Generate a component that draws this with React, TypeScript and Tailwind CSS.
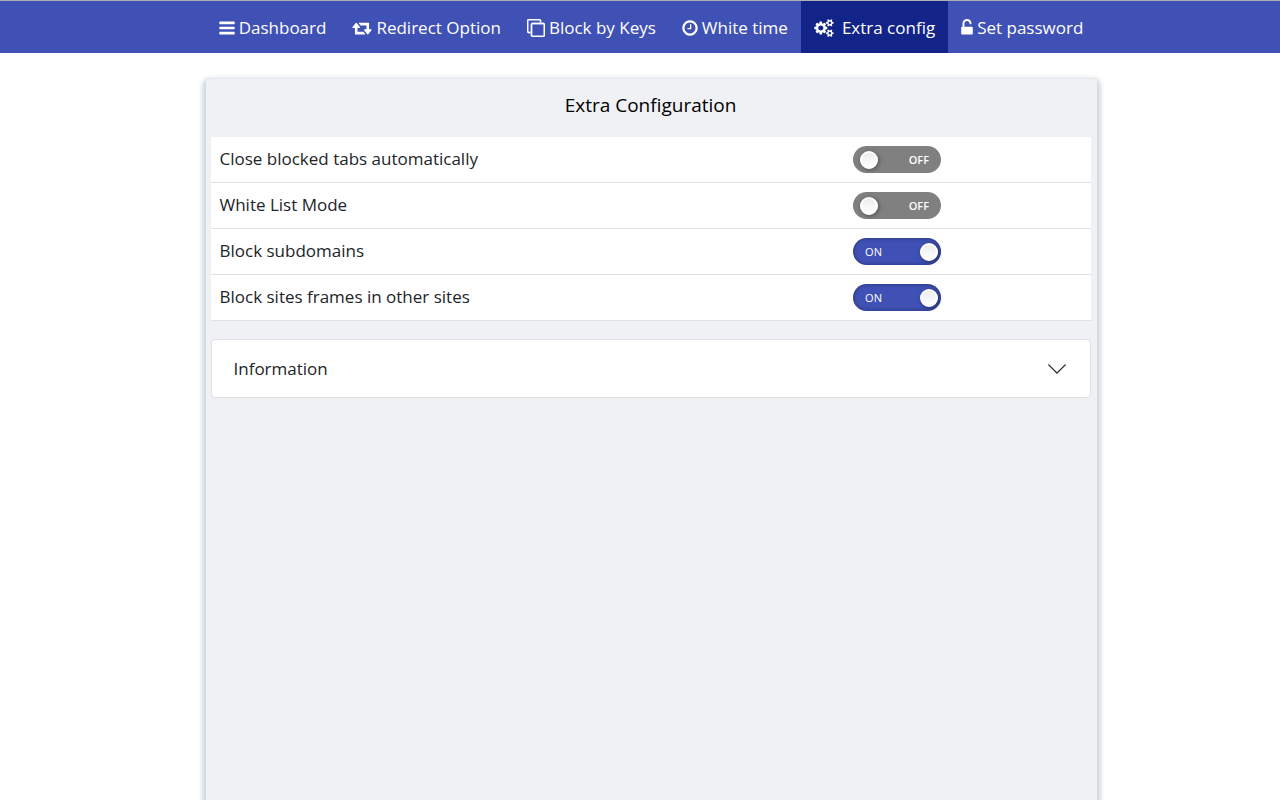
import { useState } from "react";
import clsx from "clsx";

type Icon = { viewBox: string; size: string; path: string };

const icons: Record<string, Icon> = {
  bars: {
    viewBox: "128 0 1536 1792",
    size: "h-[18px] w-4",
    path: "M1664 1344v128q0 26-19 45t-45 19h-1408q-26 0-45-19t-19-45v-128q0-26 19-45t45-19h1408q26 0 45 19t19 45zm0-512v128q0 26-19 45t-45 19h-1408q-26 0-45-19t-19-45v-128q0-26 19-45t45-19h1408q26 0 45 19t19 45zm0-512v128q0 26-19 45t-45 19h-1408q-26 0-45-19t-19-45v-128q0-26 19-45t45-19h1408q26 0 45 19t19 45z"
  },
  retweet: {
    viewBox: "0 0 1920 1792",
    size: "h-[18px] w-5",
    path: "M1280 1504q0 13-9.5 22.5t-22.5 9.5h-960q-8 0-13.5-2t-9-7-5.5-8-3-11.5-1-11.5v-600h-192q-26 0-45-19t-19-45q0-24 15-41l320-384q19-22 49-22t49 22l320 384q15 17 15 41 0 26-19 45t-45 19h-192v384h576q16 0 25 11l160 192q7 10 7 21zm640-416q0 24-15 41l-320 384q-20 23-49 23t-49-23l-320-384q-15-17-15-41 0-26 19-45t45-19h192v-384h-576q-16 0-25-12l-160-192q-7-9-7-20 0-13 9.5-22.5t22.5-9.5h960q8 0 13.5 2t9 7 5.5 8 3 11.5 1 11.5v600h192q26 0 45 19t19 45z"
  },
  clone: {
    viewBox: "0 0 1792 1792",
    size: "size-[18px] stroke-current stroke-[40]",
    path: "M1664 1632v-1088q0-13-9.5-22.5t-22.5-9.5h-1088q-13 0-22.5 9.5t-9.5 22.5v1088q0 13 9.5 22.5t22.5 9.5h1088q13 0 22.5-9.5t9.5-22.5zm128-1088v1088q0 66-47 113t-113 47h-1088q-66 0-113-47t-47-113v-1088q0-66 47-113t113-47h1088q66 0 113 47t47 113zm-384-384v160h-128v-160q0-13-9.5-22.5t-22.5-9.5h-1088q-13 0-22.5 9.5t-9.5 22.5v1088q0 13 9.5 22.5t22.5 9.5h160v128h-160q-66 0-113-47t-47-113v-1088q0-66 47-113t113-47h1088q66 0 113 47t47 113z"
  },
  clock: {
    viewBox: "128 0 1536 1792",
    size: "h-[18px] w-4",
    path: "M1024 544v448q0 14-9 23t-23 9h-320q-14 0-23-9t-9-23v-64q0-14 9-23t23-9h224v-352q0-14 9-23t23-9h64q14 0 23 9t9 23zm416 352q0-148-73-273t-198-198-273-73-273 73-198 198-73 273 73 273 198 198 273 73 273-73 198-198 73-273zm224 0q0 209-103 385.5t-279.5 279.5-385.5 103-385.5-103-279.5-279.5-103-385.5 103-385.5 279.5-279.5 385.5-103 385.5 103 279.5 279.5 103 385.5z"
  },
  cogs: {
    viewBox: "0 0 1920 1792",
    size: "h-[18px] w-5",
    path: "M896 896q0-106-75-181t-181-75-181 75-75 181 75 181 181 75 181-75 75-181zm768 512q0-52-38-90t-90-38-90 38-38 90q0 53 37.5 90.5t90.5 37.5 90.5-37.5 37.5-90.5zm0-1024q0-52-38-90t-90-38-90 38-38 90q0 53 37.5 90.5t90.5 37.5 90.5-37.5 37.5-90.5zm-384 421v185q0 10-7 19.5t-16 10.5l-155 24q-11 35-32 76 34 48 90 115 7 11 7 20 0 12-7 19-23 30-82.5 89.5t-78.5 59.5q-11 0-21-7l-115-90q-37 19-77 31-11 108-23 155-7 24-30 24h-186q-11 0-20-7.5t-10-17.5l-23-153q-34-10-75-31l-118 89q-7 7-20 7-11 0-21-8-144-133-144-160 0-9 7-19 10-14 41-53t47-61q-23-44-35-82l-152-24q-10-1-17-9.5t-7-19.5v-185q0-10 7-19.5t16-10.5l155-24q11-35 32-76-34-48-90-115-7-11-7-20 0-12 7-20 22-30 82-89t79-59q11 0 21 7l115 90q34-18 77-32 11-108 23-154 7-24 30-24h186q11 0 20 7.5t10 17.5l23 153q34 10 75 31l118-89q8-7 20-7 11 0 21 8 144 133 144 160 0 8-7 19-12 16-42 54t-45 60q23 48 34 82l152 23q10 2 17 10.5t7 19.5zm640 533v140q0 16-149 31-12 27-30 52 51 113 51 138 0 4-4 7-122 71-124 71-8 0-46-47t-52-68q-20 2-30 2t-30-2q-14 21-52 68t-46 47q-2 0-124-71-4-3-4-7 0-25 51-138-18-25-30-52-149-15-149-31v-140q0-16 149-31 13-29 30-52-51-113-51-138 0-4 4-7 4-2 35-20t59-34 30-16q8 0 46 46.5t52 67.5q20-2 30-2t30 2q51-71 92-112l6-2q4 0 124 70 4 3 4 7 0 25-51 138 17 23 30 52 149 15 149 31zm0-1024v140q0 16-149 31-12 27-30 52 51 113 51 138 0 4-4 7-122 71-124 71-8 0-46-47t-52-68q-20 2-30 2t-30-2q-14 21-52 68t-46 47q-2 0-124-71-4-3-4-7 0-25 51-138-18-25-30-52-149-15-149-31v-140q0-16 149-31 13-29 30-52-51-113-51-138 0-4 4-7 4-2 35-20t59-34 30-16q8 0 46 46.5t52 67.5q20-2 30-2t30 2q51-71 92-112l6-2q4 0 124 70 4 3 4 7 0 25-51 138 17 23 30 52 149 15 149 31z"
  },
  unlock: {
    viewBox: "320 0 1152 1792",
    size: "h-[18px] w-3",
    path: "M1376 768q40 0 68 28t28 68v576q0 40-28 68t-68 28h-960q-40 0-68-28t-28-68v-576q0-40 28-68t68-28h32v-320q0-185 131.5-316.5t316.5-131.5 316.5 131.5 131.5 316.5q0 26-19 45t-45 19h-64q-26 0-45-19t-19-45q0-106-75-181t-181-75-181 75-75 181v320h736z"
  }
};

const navItems = [
  { href: "#dashboard", label: "Dashboard", icon: "bars" },
  { href: "#redirect", label: "Redirect Option", icon: "retweet" },
  { href: "#keys", label: "Block by Keys", icon: "clone" },
  { href: "#white-time", label: "White time", icon: "clock" },
  { href: "#extra", label: "Extra config", icon: "cogs", active: true },
  { href: "#password", label: "Set password", icon: "unlock" }
];

const options = [
  { id: "close-tabs", label: "Close blocked tabs automatically", enabled: false },
  { id: "white-list", label: "White List Mode", enabled: false },
  { id: "subdomains", label: "Block subdomains", enabled: true },
  { id: "frames", label: "Block sites frames in other sites", enabled: true }
];

function NavIcon({ name }: { name: string }) {
  const icon = icons[name];
  return (
    <svg viewBox={icon.viewBox} className={clsx("shrink-0 fill-current", icon.size)} aria-hidden="true">
      <path d={icon.path} />
    </svg>
  );
}

function Switch({ id, enabled }: { id: string; enabled: boolean }) {
  const [on, setOn] = useState(enabled);

  return (
    <label
      htmlFor={id}
      className={clsx(
        "flex h-[27px] w-[88px] cursor-pointer items-center justify-between rounded-full text-[11px] text-white",
        on
          ? "flex-row-reverse bg-[#3f51b5] pr-[3px] pl-3 shadow-[inset_0_0_4px_rgba(0,0,0,0.4)]"
          : "bg-[#808080] pr-3 pl-[7px] font-semibold"
      )}
    >
      <input
        id={id}
        type="checkbox"
        checked={on}
        onChange={() => setOn(!on)}
        className="size-[18px] cursor-pointer appearance-none rounded-full border-2 border-white bg-linear-to-b from-[#ececec] to-white shadow-[1px_1px_4px_rgba(0,0,0,0.4)]"
      />
      <span>{on ? "ON" : "OFF"}</span>
    </label>
  );
}

export default function App() {
  const [infoOpen, setInfoOpen] = useState(false);

  return (
    <div className="flex min-h-screen flex-col overflow-hidden bg-white font-['Open_Sans','Noto_Sans',sans-serif] text-[17px] leading-6 text-[#212529]">
      <header className="border-t border-[#b0b0b0] bg-[#3f51b5] pl-[22px]">
        <nav className="flex justify-center">
          {navItems.map((item) => (
            <a
              key={item.href}
              href={item.href}
              className={clsx(
                "flex h-[52px] items-center px-[13px] pt-0.5 whitespace-nowrap text-white",
                item.active ? "gap-2 bg-[#132488]" : "gap-1"
              )}
            >
              <NavIcon name={item.icon} />
              {item.label}
            </a>
          ))}
        </nav>
      </header>

      <div className="flex flex-1 flex-col items-center pt-[26px] pl-[22px]">
        <main className="w-full max-w-[891px] flex-1 rounded-t-sm bg-[#f0f1f5] pr-1.5 pl-[5px] shadow-[0_3px_4px_4px_#d3dade]">
          <h1 className="pt-[11px] pb-[17px] text-center text-[19px] leading-[30px] text-black">Extra Configuration</h1>

          <ul>
            {options.map((option) => (
              <li
                key={option.id}
                className="grid h-[46px] grid-cols-[18fr_7fr] items-center border-b border-[#dee2e6] bg-white"
              >
                <label htmlFor={option.id} className="pb-px pl-[9px]">
                  {option.label}
                </label>
                <div className="pl-[9px]">
                  <Switch id={option.id} enabled={option.enabled} />
                </div>
              </li>
            ))}
          </ul>

          <section className="mt-[18px] rounded border border-[#dfe0e2] bg-white">
            <button
              type="button"
              aria-expanded={infoOpen}
              onClick={() => setInfoOpen((open) => !open)}
              className="flex h-[57px] w-full cursor-pointer items-center justify-between px-[22px]"
            >
              Information
              <svg viewBox="0 0 16 16" className={clsx("size-[22px] fill-current", infoOpen && "rotate-180")} aria-hidden="true">
                <path d="M1.646 4.646a.5.5 0 0 1 .708 0L8 10.293l5.646-5.647a.5.5 0 0 1 .708.708l-6 6a.5.5 0 0 1-.708 0l-6-6a.5.5 0 0 1 0-.708z" />
              </svg>
            </button>
          </section>
        </main>
      </div>
    </div>
  );
}
